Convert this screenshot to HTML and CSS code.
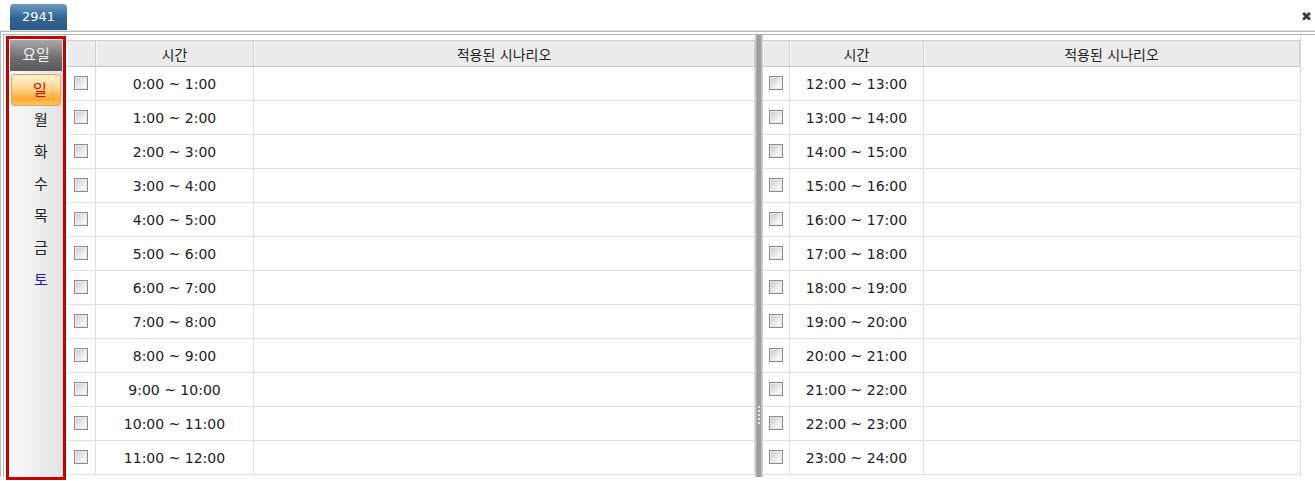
FILE: index.html
```html
<!DOCTYPE html>
<html lang="ko">
<head>
  <meta charset="UTF-8" />
  <title>2941 - 시간대별 시나리오</title>
  <link rel="stylesheet" href="styles.css">
</head>
<body>
  <div class="topbar">
    <div class="tab">2941</div>
    <span class="close">&#x2716;</span>
  </div>
  <div class="frame">
    <div class="days">
      <div class="days-head">요일</div>
      <div class="day sun selected">일</div>
      <div class="day">월</div>
      <div class="day">화</div>
      <div class="day">수</div>
      <div class="day">목</div>
      <div class="day">금</div>
      <div class="day sat">토</div>
    </div>
    <div class="grid grid-left" id="am"></div>
    <div class="splitter"><span class="grip"></span></div>
    <div class="grid grid-right" id="pm"></div>
  </div>

  <script>
    function buildGrid(el, start) {
      let html = '<div class="row head"><div class="c-chk"></div><div class="c-time">시간</div><div class="c-scn">적용된 시나리오</div></div>';
      for (let h = start; h < start + 12; h++) {
        html += '<div class="row"><div class="c-chk"><span class="chk"></span></div>' +
          '<div class="c-time">' + h + ':00 ~ ' + (h + 1) + ':00</div><div class="c-scn"></div></div>';
      }
      el.innerHTML = html;
    }
    buildGrid(document.getElementById('am'), 0);
    buildGrid(document.getElementById('pm'), 12);
  </script>
</body>
</html>
```

FILE: styles.css
```css
body {
  margin: 0;
  background: #fff;
  font-family: "DejaVu Sans", "Noto Sans CJK KR", sans-serif;
  font-size: 14px;
  color: #222;
  width: 1315px;
  height: 481px;
  overflow: hidden;
}
.topbar {
  height: 30px;
  border-bottom: 1px solid #e2e2e2;
  display: flex;
  align-items: flex-end;
  justify-content: space-between;
  padding: 0 3px 0 10px;
}
.tab {
  width: 57px;
  height: 26px;
  line-height: 26px;
  text-align: center;
  color: #fff;
  font-size: 13px;
  border-radius: 4px 4px 0 0;
  background: linear-gradient(#6e9ac2, #2f6394 55%, #2a5a88);
}
.close {
  align-self: center;
  font-size: 13px;
  font-weight: bold;
  color: #3a3a3a;
  margin-top: 2px;
}
.frame {
  display: flex;
  height: 446px;
  border-top: 4px double #b8b8b8;
  border-left: 4px double #b8b8b8;
  box-sizing: border-box;
}
.days {
  width: 60px;
  margin: 1px 1px 0 2px;
  border: 3px solid #c40000;
  box-sizing: border-box;
  height: 444px;
  padding: 1px;
  background: linear-gradient(90deg, #fbfbfb, #e2e2e2);
}
.days-head {
  height: 31px;
  line-height: 31px;
  text-align: center;
  color: #f0f0f0;
  font-size: 15px;
  background: linear-gradient(#a8a8a8, #6c6c6c 60%, #5a5a5a);
}
.day {
  height: 32px;
  line-height: 32px;
  text-align: center;
  padding-left: 10px;
  font-size: 15px;
}
.day.selected {
  height: 30px;
  line-height: 30px;
  margin: 3px 1px -2px;
  padding-left: 8px;
  border: 1px solid #e7a64a;
  border-radius: 3px;
  background: linear-gradient(#fff3d6, #ffd58a 45%, #ffab2e 80%, #ffc46a);
  position: relative;
}
.sun { color: #e00000; }
.sat { color: #1a1adc; }
.grid {
  padding-top: 5px;
}
.grid-left { width: 688px; }
.grid-right {
  width: 537px;
  border-right: 1px solid #d6dbe6;
}
.row {
  display: flex;
  height: 34px;
  border-bottom: 1px solid #dbe0ea;
  box-sizing: border-box;
  align-items: stretch;
}
.row > div {
  display: flex;
  align-items: center;
  justify-content: center;
  border-right: 1px solid #dbe0ea;
  box-sizing: border-box;
}
.row.head {
  height: 27px;
  background: #ececec;
  border-top: 1px solid #d0d0d0;
  border-bottom: 1px solid #c4c4c4;
}
.row.head > div {
  border-right: 1px solid #cfcfcf;
  box-shadow: inset 1px 0 0 #fafafa;
}
.grid-left .c-chk { width: 29px; }
.grid-left .c-time { width: 158px; }
.grid-left .c-scn { flex: 1; }
.grid-right .c-chk { width: 27px; }
.grid-right .c-time { width: 134px; }
.grid-right .c-scn { flex: 1; border-right: none; }
.chk {
  width: 12px;
  height: 12px;
  border: 1px solid #8e8e8e;
  background: linear-gradient(135deg, #c9c9c9, #f4f4f4 70%, #fff);
  box-shadow: inset 0 0 0 1px #e8e8e8;
  margin-top: -2px;
}
.splitter {
  width: 8px;
  background: linear-gradient(90deg, #d6d6d6, #9a9a9a 30%, #a2a2a2 70%, #dcdcdc);
  position: relative;
}
.grip {
  position: absolute;
  left: 3px;
  top: 371px;
  width: 2px;
  height: 18px;
  background: repeating-linear-gradient(#e8e8e8 0 2px, transparent 2px 4px);
}
```
